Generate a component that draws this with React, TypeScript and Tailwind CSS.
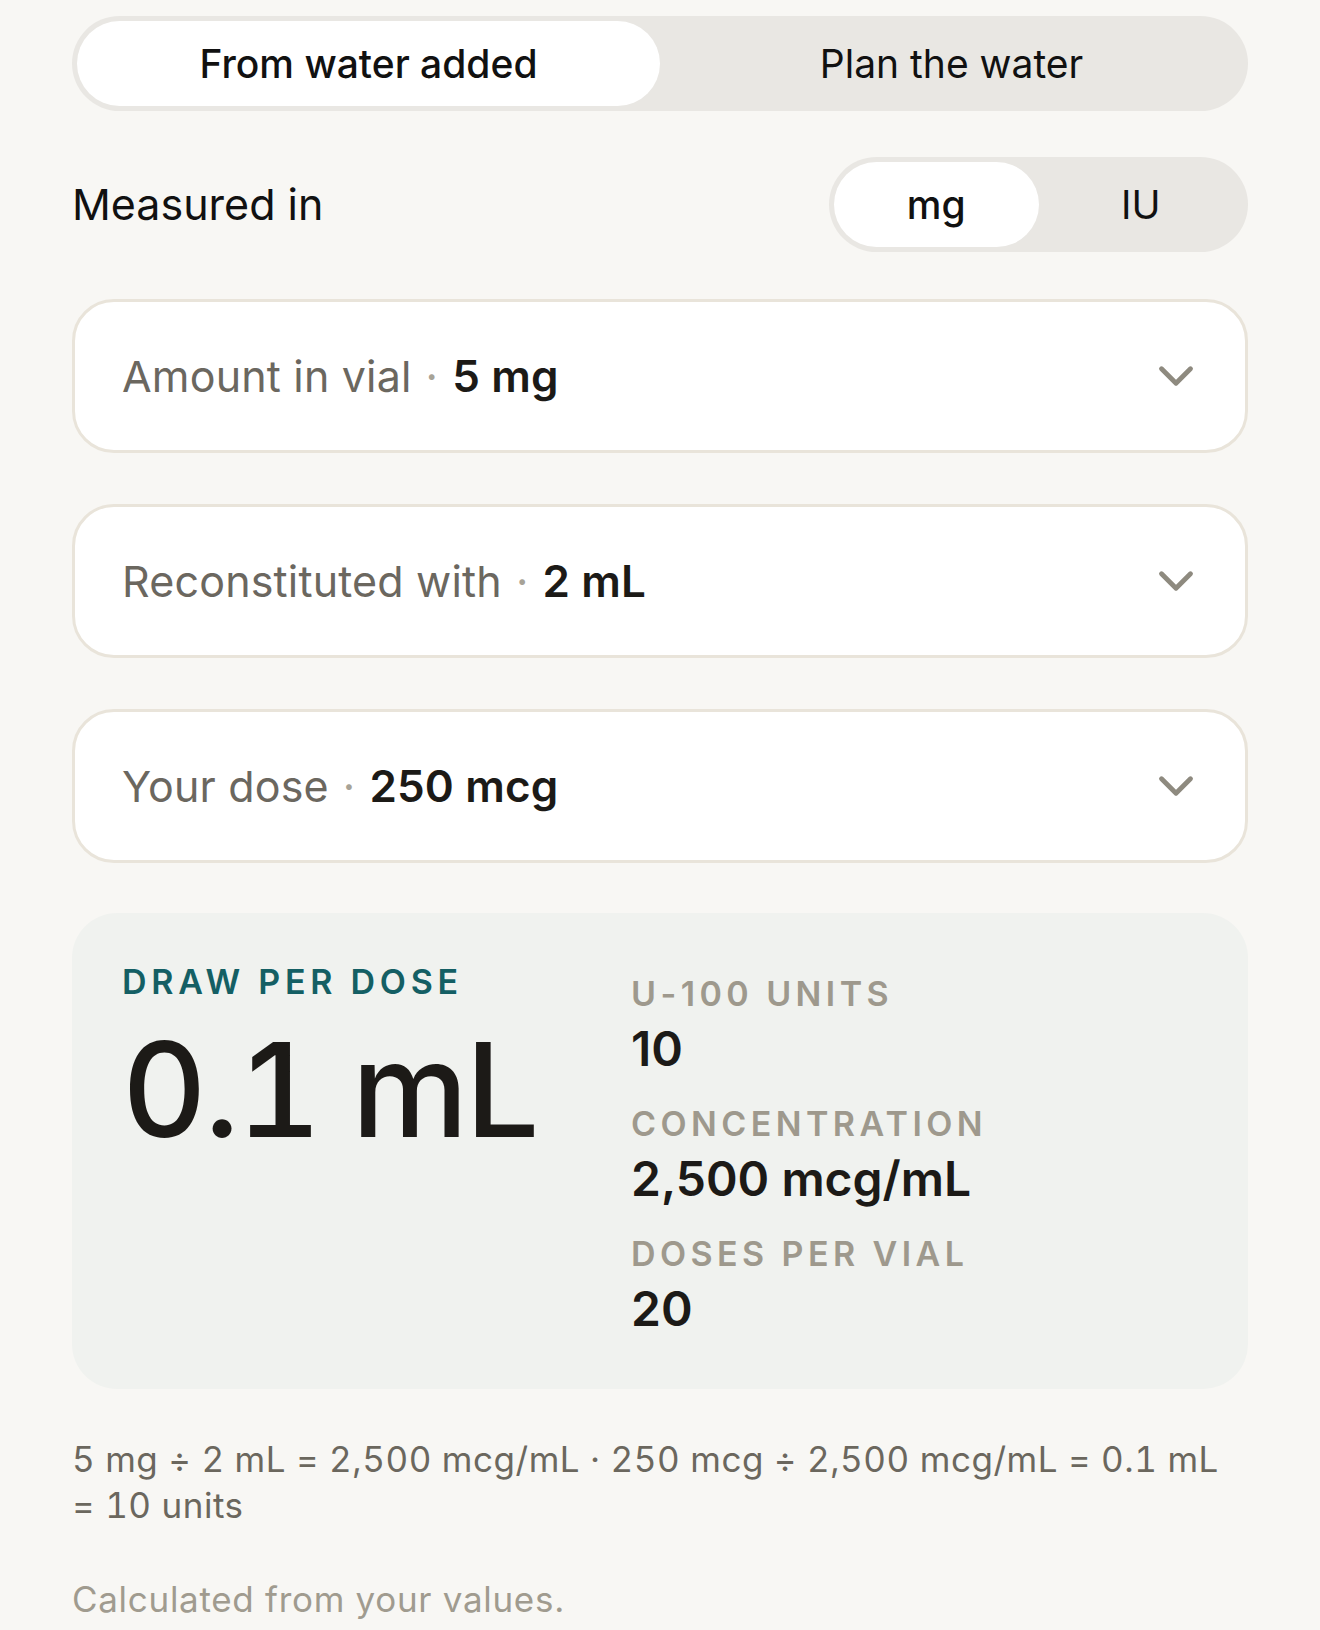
import React from 'react';
import { ChevronDown } from 'lucide-react';

const fontStack = { fontFamily: 'Inter, "Noto Sans", "Liberation Sans", sans-serif' };

interface FieldRowProps {
    label: string;
    value: string;
}

const FieldRow: React.FC<FieldRowProps> = ({ label, value }) => {
    return (
        <button className="w-full h-[154px] rounded-[42px] border-[3px] border-[#e9e4da] bg-white flex items-center justify-between pl-[47px] pr-[40px] text-left">
            <span className="text-[43px] leading-none tracking-[0.004em]">
                <span className="text-[#6b675f]">{label}</span>
                <span className="text-[#a7a397] mx-[14px]">·</span>
                <span className="text-[#1c1a17] font-semibold text-[44px]">{value}</span>
            </span>
            <ChevronDown size={58} strokeWidth={2} className="text-[#8e8a7f]" />
        </button>
    );
};

const Stat: React.FC<{ label: string; value: string }> = ({ label, value }) => (
    <div>
        <p className="text-[34px] leading-none font-semibold tracking-[0.13em] text-[#9e998d]">{label}</p>
        <p className="mt-[14px] text-[48px] leading-none font-semibold text-[#1c1a17]">{value}</p>
    </div>
);

export default function App() {
    return (
        <div className="min-h-[1630px] bg-[#f8f7f4] px-[72px] pt-[16px] text-[#111111]" style={fontStack}>
            {/* mode switch */}
            <div className="h-[95px] rounded-full bg-[#e9e7e3] p-[5px] grid grid-cols-2">
                <button className="rounded-full bg-white text-[39px] font-medium leading-none text-[#111]">From water added</button>
                <button className="rounded-full text-[39px] font-normal leading-none text-[#111]">Plan the water</button>
            </div>

            <div className="mt-[46px] h-[95px] flex items-center justify-between">
                <span className="text-[43px] leading-none text-[#111]">Measured in</span>
                <div className="w-[419px] h-[95px] rounded-full bg-[#e9e7e3] p-[5px] grid grid-cols-2">
                    <button className="rounded-full bg-white text-[39px] font-medium leading-none">mg</button>
                    <button className="rounded-full text-[39px] leading-none">IU</button>
                </div>
            </div>

            <div className="mt-[47px] flex flex-col gap-[51px]">
                <FieldRow label="Amount in vial" value="5 mg" />
                <FieldRow label="Reconstituted with" value="2 mL" />
                <FieldRow label="Your dose" value="250 mcg" />
            </div>

            {/* result */}
            <div className="mt-[50px] h-[476px] rounded-[45px] bg-[#f0f2ef] pl-[50px] pt-[52px] flex">
                <div className="w-[509px]">
                    <p className="text-[34px] leading-none font-semibold tracking-[0.14em] text-[#145f64]">DRAW PER DOSE</p>
                    <p className="mt-[25px] text-[131px] leading-none font-medium tabular-nums tracking-[-0.02em] text-[#1c1a17]">0.1 mL</p>
                </div>
                <div className="mt-[12px] flex flex-col gap-[34px]">
                    <Stat label="U-100 UNITS" value="10" />
                    <Stat label="CONCENTRATION" value="2,500 mcg/mL" />
                    <Stat label="DOSES PER VIAL" value="20" />
                </div>
            </div>

            <p className="mt-[47px] text-[35px] leading-[46px] tracking-[0.015em] tabular-nums text-[#6b675e]">
                5 mg ÷ 2 mL = 2,500 mcg/mL · 250 mcg ÷ 2,500 mcg/mL = 0.1 mL <span className="whitespace-nowrap">= 10 units</span>
            </p>
            <p className="mt-[48px] text-[35px] leading-[46px] tracking-[0.02em] text-[#a09b8f]">Calculated from your values.</p>
        </div>
    );
}
